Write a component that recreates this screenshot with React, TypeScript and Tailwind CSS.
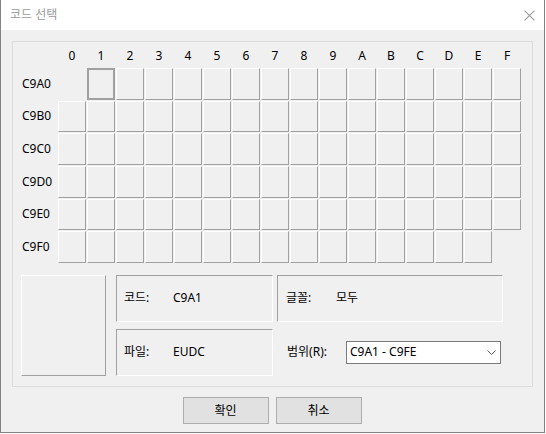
import React from "react";

const COLS = ["0", "1", "2", "3", "4", "5", "6", "7", "8", "9", "A", "B", "C", "D", "E", "F"];
const ROWS = ["C9A0", "C9B0", "C9C0", "C9D0", "C9E0", "C9F0"];

function Cell({ row, col }: { row: number; col: number }) {
  // C9A0 and C9FF are not valid codes, so those slots stay empty
  if ((row === 0 && col === 0) || (row === 5 && col === 15)) {
    return <div />;
  }
  if (row === 0 && col === 1) {
    return <div className="border-2 border-[#a0a0a0] bg-[#f0f0f0]" />;
  }
  return (
    <div className="border-l border-t border-r border-b border-l-white border-t-white border-r-[#a0a0a0] border-b-[#a0a0a0] bg-[#f0f0f0]" />
  );
}

function EtchedBox({ className, children }: { className: string; children?: React.ReactNode }) {
  return (
    <div
      className={`flex items-center border border-l-[#a0a0a0] border-t-[#a0a0a0] border-r-white border-b-white ${className}`}
    >
      {children}
    </div>
  );
}

function CloseIcon() {
  return (
    <svg viewBox="0 0 10 10" className="h-[11px] w-[11px]" aria-hidden="true">
      <path d="M0.5 0.5 9.5 9.5M9.5 0.5 0.5 9.5" stroke="#9a9a9a" strokeWidth="1" fill="none" />
    </svg>
  );
}

function ChevronDown() {
  return (
    <svg viewBox="0 0 9 5" className="h-[5px] w-[9px]" aria-hidden="true">
      <path d="M0.5 0.5 4.5 4.5 8.5 0.5" stroke="#606060" strokeWidth="1" fill="none" />
    </svg>
  );
}

export default function App() {
  return (
    <div className="h-[433px] w-[545px] border-l border-r border-b border-[#838383] bg-[#f0f0f0] font-['Noto_Sans','Noto_Sans_CJK_KR',sans-serif] text-[12px] text-black">
      <div className="flex h-[30px] items-center justify-between bg-white pl-[9px] pr-[9px]">
        <span className="text-[12px] text-[#9a9a9a]">코드 선택</span>
        <CloseIcon />
      </div>

      <div className="ml-[11px] mt-[11px] h-[346px] w-[521px] border border-[#dcdcdc] pl-[8px]">
        <div className="grid grid-cols-[36px_repeat(16,28px)] grid-rows-[25px_repeat(6,31.67px)] gap-x-px gap-y-px">
          <div />
          {COLS.map((c) => (
            <div key={c} className="flex items-center justify-center pt-[2px] leading-none">
              {c}
            </div>
          ))}
          {ROWS.map((r, ri) => (
            <React.Fragment key={r}>
              <div className="flex items-center pl-px leading-none">{r}</div>
              {COLS.map((c, ci) => (
                <Cell key={c} row={ri} col={ci} />
              ))}
            </React.Fragment>
          ))}
        </div>

        <div className="mt-[12px] flex">
          <div className="h-[101px] w-[85px] border border-l-white border-t-white border-r-[#a0a0a0] border-b-[#a0a0a0]" />
          <div className="ml-[10px] flex flex-col gap-[7px]">
            <div className="flex gap-[4px]">
              <EtchedBox className="h-[47px] w-[157px] pl-[7px]">
                <span className="w-[49px]">코드:</span>
                <span>C9A1</span>
              </EtchedBox>
              <EtchedBox className="h-[47px] w-[226px] pl-[8px]">
                <span className="w-[50px]">글꼴:</span>
                <span>모두</span>
              </EtchedBox>
            </div>
            <div className="flex gap-[4px]">
              <EtchedBox className="h-[47px] w-[157px] pl-[7px]">
                <span className="w-[49px]">파일:</span>
                <span>EUDC</span>
              </EtchedBox>
              <div className="flex h-[47px] w-[226px] items-center pl-[10px]">
                <span className="w-[59px]">범위(R):</span>
                <div className="flex h-[23px] w-[155px] items-center justify-between border border-[#7a7a7a] bg-white pl-[3px] pr-[4px]">
                  <span>C9A1 - C9FE</span>
                  <ChevronDown />
                </div>
              </div>
            </div>
          </div>
        </div>
      </div>

      <div className="mt-[10px] flex justify-center gap-[7px] pr-[1px]">
        <button className="h-[27px] w-[86px] border border-[#adadad] bg-[#e1e1e1] text-[12px]">확인</button>
        <button className="h-[27px] w-[86px] border border-[#adadad] bg-[#e1e1e1] text-[12px]">취소</button>
      </div>
    </div>
  );
}
